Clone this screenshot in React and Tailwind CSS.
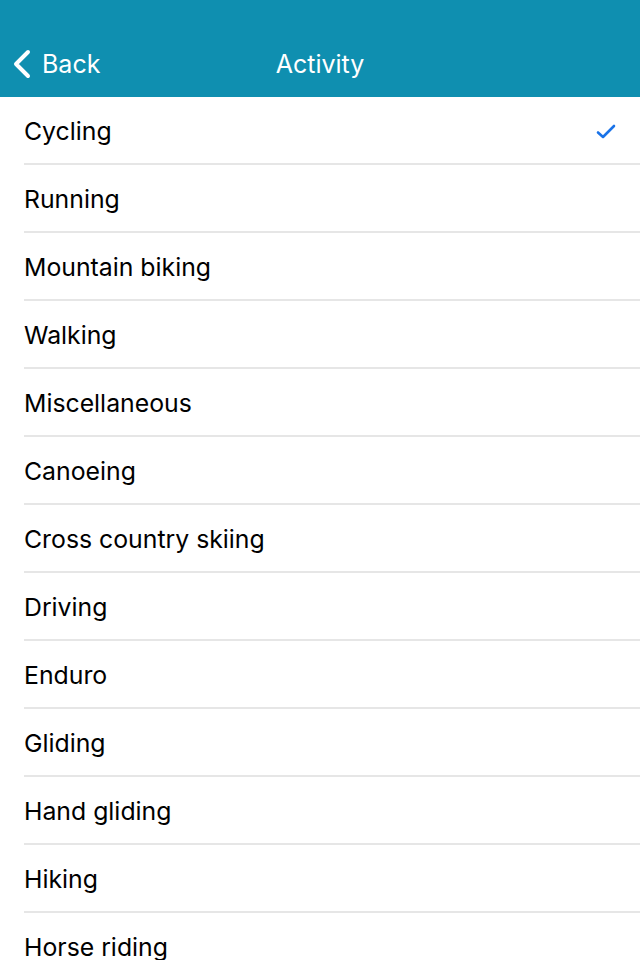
import { useState } from 'react'

const activities = [
  'Cycling',
  'Running',
  'Mountain biking',
  'Walking',
  'Miscellaneous',
  'Canoeing',
  'Cross country skiing',
  'Driving',
  'Enduro',
  'Gliding',
  'Hand gliding',
  'Hiking',
  'Horse riding',
]

export default function App() {
  const [selected, setSelected] = useState('Cycling')

  return (
    <div className="h-[960px] overflow-hidden bg-white font-['Inter',sans-serif] antialiased">
      {/* Nav bar */}
      <header className="h-[97px] bg-[#0f8fb0] flex items-end pb-[18px] px-3 relative text-white">
        <button className="flex items-center gap-[10px] text-[25px] leading-none">
          <svg width="20" height="30" viewBox="0 0 20 30" fill="none">
            <path d="M16 3 L4 15 L16 27" stroke="white" strokeWidth="4" strokeLinecap="round" strokeLinejoin="round" />
          </svg>
          <span>Back</span>
        </button>
        <div className="absolute left-0 right-0 bottom-[18px] text-center text-[25px] leading-[30px] pointer-events-none">
          Activity
        </div>
      </header>

      {/* List */}
      <ul className="pl-6">
        {activities.map(a => (
          <li
            key={a}
            onClick={() => setSelected(a)}
            className="h-[68px] pt-1 border-b-2 border-[#e6e6e6] flex items-center justify-between pr-[24px] text-[24.8px] text-black"
          >
            <span>{a}</span>
            {selected === a && (
              <svg width="20" height="16" viewBox="0 0 20 16" fill="none">
                <path d="M2 8.5 L7 13 L18 2" stroke="#1a73e8" strokeWidth="2.6" strokeLinecap="round" strokeLinejoin="round" />
              </svg>
            )}
          </li>
        ))}
      </ul>
    </div>
  )
}
